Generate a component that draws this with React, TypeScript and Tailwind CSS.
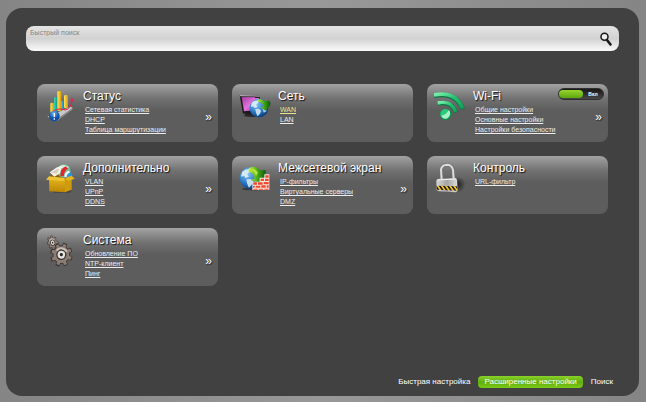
import { useState, type ReactNode } from 'react';

type Section = {
  title: string;
  icon: ReactNode;
  links: string[];
  more?: boolean;
  toggle?: boolean;
};

function StatusIcon() {
  return (
    <svg viewBox="0 0 120 132" className="h-11 w-10 shrink-0" aria-hidden="true">
      <defs>
        <linearGradient id="barGold">
          <stop offset="0" stopColor="#ffe45c" />
          <stop offset="1" stopColor="#d99a08" />
        </linearGradient>
        <linearGradient id="barTeal">
          <stop offset="0" stopColor="#3fd6b4" />
          <stop offset="1" stopColor="#0a8a78" />
        </linearGradient>
        <linearGradient id="barBlue">
          <stop offset="0" stopColor="#5cc6f2" />
          <stop offset="1" stopColor="#0b74b8" />
        </linearGradient>
        <radialGradient id="badge" cx="0.45" cy="0.25">
          <stop offset="0" stopColor="#6db8ee" />
          <stop offset="1" stopColor="#0b4fa8" />
        </radialGradient>
      </defs>
      <path d="M22 98 L48 108 L98 72 L92 68 Z" fill="#c8c8c8" />
      <path d="M48 108 L98 72 L97 77 L50 112 Z" fill="#8d8d8d" />
      <rect x="31" y="56" width="11" height="32" rx="4" fill="url(#barGold)" />
      <rect x="42" y="39" width="12" height="44" rx="4" fill="url(#barTeal)" />
      <rect x="52" y="21" width="12" height="60" rx="4" fill="url(#barGold)" />
      <rect x="63" y="51" width="10" height="25" rx="4" fill="url(#barBlue)" />
      <rect x="72" y="33" width="12" height="40" rx="4" fill="url(#barGold)" />
      <path d="M38 82 Q58 70 75 78 Q93 75 95 50" fill="none" stroke="#ed1f50" strokeWidth="3" />
      <path d="M90 52 L96 40 L101 53 Z" fill="#ed1f50" />
      <circle cx="43" cy="96" r="16" fill="url(#badge)" />
      <path d="M43 87 V99 M43 103 V107" stroke="#fff" strokeWidth="4" />
    </svg>
  );
}

function Globe({ cx, cy, r }: { cx: number; cy: number; r: number }) {
  return (
    <g transform={`translate(${cx} ${cy}) scale(${r / 25})`}>
      <circle r="25" fill="url(#globe)" />
      <path d="M-19 -14 Q-10 -22 0 -20 L-3 -13 L-8 -9 L-4 -3 L-12 0 L-15 -5 L-22 -3 Z" fill="#d5eaf7" />
      <path d="M-10 3 L0 2 L6 8 L2 16 L-4 22 L-8 13 Z" fill="#c3def1" />
      <path d="M9 3 L18 1 L20 9 L13 13 Z" fill="#a5cceb" />
    </g>
  );
}

function GlobeDefs() {
  return (
    <defs>
      <radialGradient id="globe" cx="0.35" cy="0.3" r="0.8">
        <stop offset="0" stopColor="#8cc8f2" />
        <stop offset="0.55" stopColor="#2878c4" />
        <stop offset="1" stopColor="#052c6b" />
      </radialGradient>
      <linearGradient id="arrow" x1="0" x2="1">
        <stop offset="0" stopColor="#c8ef3a" />
        <stop offset="0.5" stopColor="#46ab16" />
        <stop offset="1" stopColor="#0c5710" />
      </linearGradient>
      <linearGradient id="screen" x1="0" y1="0" x2="1" y2="1">
        <stop offset="0" stopColor="#a23aa0" />
        <stop offset="0.5" stopColor="#e472de" />
        <stop offset="1" stopColor="#8a2288" />
      </linearGradient>
    </defs>
  );
}

function NetworkIcon() {
  return (
    <svg viewBox="0 0 120 132" className="h-11 w-10 shrink-0" aria-hidden="true">
      <GlobeDefs />
      <ellipse cx="48" cy="95" rx="22" ry="4" fill="#2c2c2c" />
      <path d="M33 84 L48 82 L52 94 L30 93 Z" fill="#222" />
      <path d="M14 34 L74 35 L76 84 L24 89 Z" fill="#1d1a1d" />
      <path d="M14 33 L74 35 L74 38 L16 37 Z" fill="#b9a9b9" />
      <path d="M20 39 L72 40 L73 78 L27 82 Z" fill="url(#screen)" />
      <Globe cx={72} cy={72} r={28} />
      <path d="M66 48 Q80 42 88 52 L103 50 Q108 55 105 65 L92 80 L77 71 L86 65 Q80 54 66 52 Z" fill="url(#arrow)" />
    </svg>
  );
}

function WifiIcon() {
  return (
    <svg viewBox="0 0 120 132" className="h-11 w-10 shrink-0" aria-hidden="true">
      <defs>
        <linearGradient id="wave" x1="0" y1="0" x2="1" y2="1">
          <stop offset="0" stopColor="#7df0ac" />
          <stop offset="0.5" stopColor="#22bf70" />
          <stop offset="1" stopColor="#12a05a" />
        </linearGradient>
      </defs>
      <path d="M12 35 Q76 22 99 75" fill="none" stroke="#0c7442" strokeWidth="14" />
      <path d="M23 59 Q66 50 78 86" fill="none" stroke="#0c7442" strokeWidth="13" />
      <path d="M12 33 Q76 20 98 73" fill="none" stroke="url(#wave)" strokeWidth="11" />
      <path d="M23 57 Q66 48 77 84" fill="none" stroke="url(#wave)" strokeWidth="10" />
      <circle cx="47" cy="91" r="17" fill="#0d8e50" />
      <circle cx="46" cy="90" r="15" fill="#28ca7b" />
      <path d="M47 90 L57 78 Q66 91 52 103 Q39 107 34 95 Z" fill="#a5f3c5" />
    </svg>
  );
}

function BoxIcon() {
  return (
    <svg viewBox="0 0 120 132" className="h-11 w-10 shrink-0" aria-hidden="true">
      <defs>
        <linearGradient id="carton" x1="0" y1="0" x2="0" y2="1">
          <stop offset="0" stopColor="#e3b41d" />
          <stop offset="1" stopColor="#bd8605" />
        </linearGradient>
      </defs>
      <path d="M40 105 L96 103 L90 110 L42 110 Z" fill="#444" />
      <path d="M26 60 L56 54 L92 58 L64 68 Z" fill="#8d6503" />
      <circle cx="72" cy="45" r="20" fill="#6fbda1" />
      <path d="M55 34 Q70 20 87 34 L76 40 Z" fill="#d5efe0" />
      <path d="M74 61 L93 49 L98 59 L84 66 Z" fill="#2696df" />
      <path d="M29 49 L51 34 L66 31 L60 52 L43 62 Z" fill="#f5f2e9" />
      <path d="M32 50 L50 40 L58 38 L50 53 Z" fill="#d8cfbb" />
      <path d="M61 60 Q61 36 78 31 L84 38 Q71 44 72 61 Z" fill="#e12a28" />
      <path d="M73 62 Q74 49 86 44 L90 49 Q80 53 80 63 Z" fill="#fff" />
      <path d="M27 66 L75 69 L75 109 L28 106 Z" fill="url(#carton)" />
      <path d="M75 69 L95 63 L95 101 L75 109 Z" fill="#cf9a0c" />
      <path d="M27 61 L75 66 L70 75 L18 71 Z" fill="#eec434" />
      <path d="M75 66 L95 59 L104 68 L84 75 Z" fill="#e5b320" />
    </svg>
  );
}

function FirewallIcon() {
  return (
    <svg viewBox="0 0 120 132" className="h-11 w-10 shrink-0" aria-hidden="true">
      <ellipse cx="50" cy="99" rx="30" ry="4" fill="#393939" />
      <Globe cx={47} cy={66} r={33} />
      <path d="M41 37 Q57 25 76 43 L93 43 L89 65 L70 79 L48 73 L59 67 Q57 50 41 47 Z" fill="url(#arrow)" />
      <path d="M49 38 Q60 36 69 50 L63 60 Q59 45 45 42 Z" fill="#b5e23e" />
      <path d="M52 77 H74 V65 H88 V55 H103 V102 H52 Z" fill="#f5e9df" />
      <g fill="#ee4930">
        <path d="M91 58 H101 V65 H91 Z M77 68 H87 V75 H77 Z M90 68 H101 V75 H90 Z" />
        <path d="M55 79 H66 V86 H55 Z M69 79 H83 V86 H69 Z M86 78 H101 V85 H86 Z" />
        <path d="M54 89 H59 V95 H54 Z M62 89 H76 V95 H62 Z M79 88 H92 V95 H79 Z M95 88 H101 V95 H95 Z" />
        <path d="M55 98 H68 V101 H55 Z M71 98 H85 V101 H71 Z M88 98 H101 V101 H88 Z" />
      </g>
    </svg>
  );
}

function LockIcon() {
  return (
    <svg viewBox="0 0 120 132" className="h-11 w-10 shrink-0" aria-hidden="true">
      <defs>
        <linearGradient id="steel">
          <stop offset="0" stopColor="#d6d6d6" />
          <stop offset="0.5" stopColor="#a5a5a5" />
          <stop offset="1" stopColor="#dedede" />
        </linearGradient>
        <radialGradient id="lockShade">
          <stop offset="0" stopColor="#222" />
          <stop offset="1" stopColor="#222" stopOpacity="0" />
        </radialGradient>
        <pattern id="hazard" width="10" height="10" patternUnits="userSpaceOnUse" patternTransform="rotate(-35)">
          <rect width="10" height="10" fill="#f3c42d" />
          <rect width="5" height="10" fill="#221c10" />
        </pattern>
      </defs>
      <ellipse cx="84" cy="86" rx="23" ry="24" fill="url(#lockShade)" />
      <path d="M36 72 L34 40 Q37 27 51 27 Q66 27 69 41 L72 71" fill="none" stroke="#707070" strokeWidth="10" />
      <path d="M35 72 L33 40 Q36 27 51 26 Q65 26 69 41 L71 71" fill="none" stroke="#dcdcdc" strokeWidth="6" />
      <path d="M19 74 Q20 68 28 68 L75 66 Q80 66 81 72 L83 101 Q82 107 76 109 L27 106 Q20 105 20 99 Z" fill="url(#steel)" />
      <path d="M23 72 L77 69" stroke="#f4f4f4" strokeWidth="3" />
      <path d="M20 89 L82 91 L82 104 L20 101 Z" fill="url(#hazard)" />
    </svg>
  );
}

function Gear() {
  return (
    <>
      <g fill="#3d3734">
        {[0, 45, 90, 135].map(a => (
          <rect key={a} x="-7" y="-36" width="14" height="72" rx="3" transform={`rotate(${a + 12})`} />
        ))}
        <circle r="28" />
      </g>
      <g fill="#8b7d75">
        {[0, 45, 90, 135].map(a => (
          <rect key={a} x="-5" y="-33" width="10" height="65" rx="2" transform={`rotate(${a + 12})`} />
        ))}
        <circle r="25" />
      </g>
      <path d="M-19 -12 A23 23 0 0 1 19 -12 L9 -7 A13 13 0 0 0 -10 -6 Z" fill="#c9beb6" />
      <circle r="16" fill="#35312f" />
      <circle r="12" fill="#e6e4e2" />
      <circle r="5" fill="#292929" />
    </>
  );
}

function GearsIcon() {
  return (
    <svg viewBox="0 0 120 132" className="h-11 w-10 shrink-0" aria-hidden="true">
      <g transform="translate(38 44) rotate(-20) scale(.46 .6)"><Gear /></g>
      <g transform="translate(64 80) rotate(8) scale(.94 1)"><Gear /></g>
    </svg>
  );
}

const SECTIONS: Section[] = [
  { title: 'Статус', icon: <StatusIcon />, links: ['Сетевая статистика', 'DHCP', 'Таблица маршрутизации'], more: true },
  { title: 'Сеть', icon: <NetworkIcon />, links: ['WAN', 'LAN'] },
  { title: 'Wi-Fi', icon: <WifiIcon />, links: ['Общие настройки', 'Основные настройки', 'Настройки безопасности'], more: true, toggle: true },
  { title: 'Дополнительно', icon: <BoxIcon />, links: ['VLAN', 'UPnP', 'DDNS'], more: true },
  { title: 'Межсетевой экран', icon: <FirewallIcon />, links: ['IP-фильтры', 'Виртуальные серверы', 'DMZ'], more: true },
  { title: 'Контроль', icon: <LockIcon />, links: ['URL-фильтр'] },
  { title: 'Система', icon: <GearsIcon />, links: ['Обновление ПО', 'NTP-клиент', 'Пинг'], more: true },
];

function WifiSwitch() {
  const [on, setOn] = useState(true);
  return (
    <button
      type="button"
      role="switch"
      aria-checked={on}
      aria-label="Wi-Fi"
      onClick={() => setOn(!on)}
      className="absolute right-1 top-1 flex h-3 w-[46px] items-center rounded-md border border-[#303030] bg-gradient-to-b from-[#181818] to-[#484848]"
    >
      <span className={on ? 'h-2 w-6 rounded-sm bg-gradient-to-b from-[#96d52d] to-[#5da80c]' : 'order-2 h-2 w-6 rounded-sm bg-[#888]'} />
      <span className="flex-1 text-center text-[5px] leading-none font-bold text-white">{on ? 'Вкл' : 'Выкл'}</span>
    </button>
  );
}

function SectionCard({ section }: { section: Section }) {
  return (
    <section className="relative flex min-h-[58px] rounded-lg bg-[#5d5d5d] bg-gradient-to-b from-[#a3a3a3] via-[#727272] via-25% to-[#5d5d5d] to-45% pl-[3px]">
      {section.icon}
      <div className="min-w-0 flex-1 pl-[3px] pt-1">
        <h2 className="text-[12px] leading-4 text-white [text-shadow:1px_1px_1px_#111]">{section.title}</h2>
        <ul className="pl-[2px] pt-px">
          {section.links.map(link => (
            <li key={link} className="text-[7px] leading-[10px]">
              <a href="#" className={link === 'WAN' ? 'text-[#e6e796] underline' : 'text-[#ececec] underline'}>
                {link}
              </a>
            </li>
          ))}
        </ul>
      </div>
      {section.more && (
        <button type="button" aria-label="Ещё" className="self-center px-[6px] pt-2 text-[12px] leading-4 text-white [text-shadow:1px_1px_1px_#222]">
          »
        </button>
      )}
      {section.toggle && <WifiSwitch />}
    </section>
  );
}

export default function App() {
  return (
    <div className="flex min-h-screen flex-col bg-gradient-to-r from-[#858585] via-[#989898] to-[#858585] pt-2 pr-[7px] pb-[6px] pl-[6px] font-['Liberation_Sans',sans-serif]">
      <main className="flex flex-1 flex-col rounded-2xl bg-[#414141] px-5 pt-[18px] pb-2">
        {/* Search */}
        <form
          role="search"
          onSubmit={e => e.preventDefault()}
          className="flex h-[25px] items-start rounded-lg bg-gradient-to-b from-[#e4e4e4] via-[#d2d2d2] to-[#fafafa]"
        >
          <input
            type="search"
            aria-label="Быстрый поиск"
            placeholder="Быстрый поиск"
            className="h-3 min-w-0 flex-1 bg-transparent pl-1 text-[7px] text-[#444] outline-none placeholder:text-[#858585]"
          />
          <button type="submit" aria-label="Найти" className="self-center pr-[6px]">
            <svg viewBox="0 0 14 14" className="h-[14px] w-[14px]" fill="none" aria-hidden="true">
              <circle cx="5.5" cy="4.8" r="3.5" fill="#eee" stroke="#171717" strokeWidth="1.5" />
              <path d="M8 8 L11.5 12.5" stroke="#171717" strokeWidth="2.5" strokeLinecap="round" />
            </svg>
          </button>
        </form>

        {/* Sections */}
        <div className="mt-[33px] grid grid-cols-3 gap-[14px] px-[11px]">
          {SECTIONS.map(section => (
            <SectionCard key={section.title} section={section} />
          ))}
        </div>

        {/* Modes */}
        <nav className="mt-auto flex items-center justify-end gap-2 pr-[6px] text-[8px] leading-3 text-white">
          <a href="#">Быстрая настройка</a>
          <a href="#" aria-current="page" className="rounded-sm bg-gradient-to-b from-[#8bd12b] via-[#5fae0a] to-[#7bca16] px-[6px]">
            Расширенные настройки
          </a>
          <a href="#">Поиск</a>
        </nav>
      </main>
    </div>
  );
}
